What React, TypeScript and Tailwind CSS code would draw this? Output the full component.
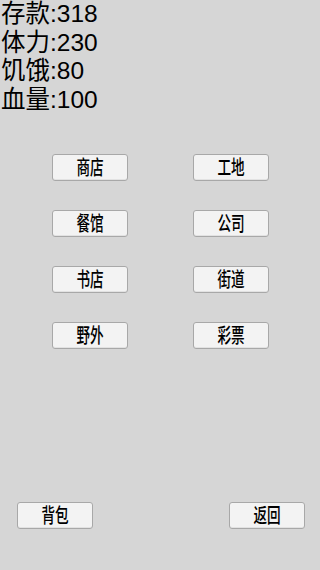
const stats = [
  { label: "存款", value: 318 },
  { label: "体力", value: 230 },
  { label: "饥饿", value: 80 },
  { label: "血量", value: 100 },
];

const places = [
  ["商店", "工地"],
  ["餐馆", "公司"],
  ["书店", "街道"],
  ["野外", "彩票"],
];

const cjk = { fontFamily: '"Liberation Sans", "Noto Sans CJK SC", sans-serif' };

function Btn({ label }: { label: string }) {
  return (
    <button className="flex h-[27px] w-[76px] items-center justify-center rounded-[3px] border border-[#a8a8a8] bg-[#f3f3f3] text-[20px] font-medium leading-none text-black shadow-[inset_0_-1px_0_#e2e2e2]">
      <span className="inline-block scale-x-[0.68]">{label}</span>
    </button>
  );
}

export default function App() {
  return (
    <div className="flex h-[570px] w-[320px] flex-col bg-[#d6d6d6] text-black" style={cjk}>
      <div className="pl-px text-[24.5px] leading-[28.5px]">
        {stats.map((s) => (
          <div key={s.label}>
            {s.label}:{s.value}
          </div>
        ))}
      </div>

      <div className="mt-[40px] flex flex-col gap-[29px]">
        {places.map((row) => (
          <div key={row[0]} className="flex pl-[52px] gap-[65px]">
            <Btn label={row[0]} />
            <Btn label={row[1]} />
          </div>
        ))}
      </div>

      <div className="mt-auto mb-[41px] flex justify-between pl-[17px] pr-[15px]">
        <Btn label="背包" />
        <Btn label="返回" />
      </div>
    </div>
  );
}
